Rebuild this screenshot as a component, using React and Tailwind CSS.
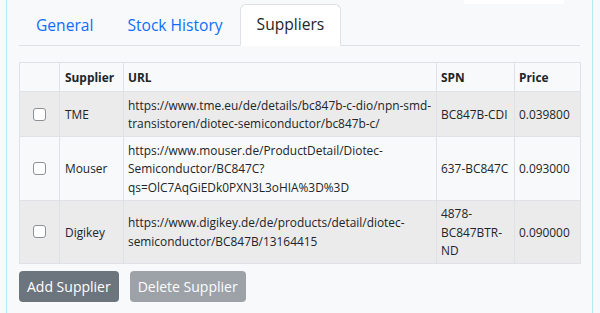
import React from 'react';

const suppliers = [
  {
    id: 1,
    name: 'TME',
    url: ['https://www.tme.eu/de/details/bc847b-c-dio/npn-smd-', 'transistoren/diotec-semiconductor/bc847b-c/'],
    spn: ['BC847B-CDI'],
    price: '0.039800',
  },
  {
    id: 2,
    name: 'Mouser',
    url: ['https://www.mouser.de/ProductDetail/Diotec-', 'Semiconductor/BC847C?', 'qs=OlC7AqGiEDk0PXN3L3oHIA%3D%3D'],
    spn: ['637-BC847C'],
    price: '0.093000',
  },
  {
    id: 3,
    name: 'Digikey',
    url: ['https://www.digikey.de/de/products/detail/diotec-', 'semiconductor/BC847B/13164415'],
    spn: ['4878-', 'BC847BTR-', 'ND'],
    price: '0.090000',
  },
];

function Lines({ lines }) {
  return lines.map((l, i) => (
    <span key={i} className="block whitespace-nowrap">{l}</span>
  ));
}

export default function App() {
  const tabs = ['General', 'Stock History', 'Suppliers'];

  return (
    <div
      className="w-[600px] h-[313px] overflow-hidden bg-[#f8f9fa] relative text-[#212529]"
      style={{ fontFamily: '"Open Sans", "Noto Sans", sans-serif' }}
    >
      {/* bottom edge of a field above the panel */}
      <div className="absolute top-0 left-[464px] w-[100px] h-[4px] bg-white" />

      <div className="ml-[6px] w-[587px] h-full border-x border-[#b3ecf7] px-[12px] pt-[4px]">
        {/* tabs */}
        <ul className="flex border-b border-[#dee2e6] h-[42px]">
          {tabs.map((t) => {
            const active = t === 'Suppliers';
            return (
              <li key={t} className="-mb-px">
                <span
                  className={
                    active
                      ? 'block h-[42px] px-[16px] pt-[7px] text-[15.6px] leading-[24px] bg-white border border-[#dee2e6] border-b-white rounded-t-[6px] text-[#212529]'
                      : 'block h-[42px] px-[16px] pt-[8px] text-[15.6px] leading-[24px] text-[#0d6efd] border border-transparent'
                  }
                >
                  {t}
                </span>
              </li>
            );
          })}
        </ul>

        {/* suppliers table */}
        <table className="mt-[16px] w-[561px] table-fixed border-collapse text-[11.9px] leading-[18.5px]">
          <colgroup>
            <col className="w-[40px]" />
            <col className="w-[64px]" />
            <col className="w-[313px]" />
            <col className="w-[78px]" />
            <col className="w-[66px]" />
          </colgroup>
          <thead>
            <tr className="h-[29px]">
              <th className="border border-[#dee2e6] px-[5px] py-[3px]"></th>
              <th className="border border-[#dee2e6] px-[5px] py-[3px] text-left font-bold">Supplier</th>
              <th className="border border-[#dee2e6] px-[4px] py-[3px] text-left font-bold">URL</th>
              <th className="border border-[#dee2e6] px-[4px] py-[3px] text-left font-bold">SPN</th>
              <th className="border border-[#dee2e6] px-[4px] py-[3px] text-left font-bold">Price</th>
            </tr>
          </thead>
          <tbody>
            {suppliers.map((s, i) => (
              <tr key={s.id} className={i % 2 === 0 ? 'bg-[#ebebec]' : ''}>
                <td className="border border-[#dee2e6] px-[4px] py-[3.5px] align-middle">
                  <div className="flex justify-center">
                    <input
                      type="checkbox"
                      className="appearance-none w-[13px] h-[13px] border border-[#8c9196] rounded-[3px] bg-white"
                    />
                  </div>
                </td>
                <td className="border border-[#dee2e6] px-[5px] py-[3.5px] align-middle">{s.name}</td>
                <td className="border border-[#dee2e6] px-[4px] py-[3.5px] align-middle"><Lines lines={s.url} /></td>
                <td className="border border-[#dee2e6] px-[4px] py-[3.5px] align-middle"><Lines lines={s.spn} /></td>
                <td className="border border-[#dee2e6] px-[4px] py-[3.5px] align-middle">{s.price}</td>
              </tr>
            ))}
          </tbody>
        </table>

        <div className="flex gap-[11px] mt-[7px]">
          <button className="h-[31px] px-[8px] text-[14px] leading-[21px] text-white bg-[#6c757d] rounded-[4px]">
            Add Supplier
          </button>
          <button disabled className="h-[31px] px-[8px] text-[14px] leading-[21px] text-white bg-[#6c757d] opacity-65 rounded-[4px]">
            Delete Supplier
          </button>
        </div>
      </div>
    </div>
  );
}
